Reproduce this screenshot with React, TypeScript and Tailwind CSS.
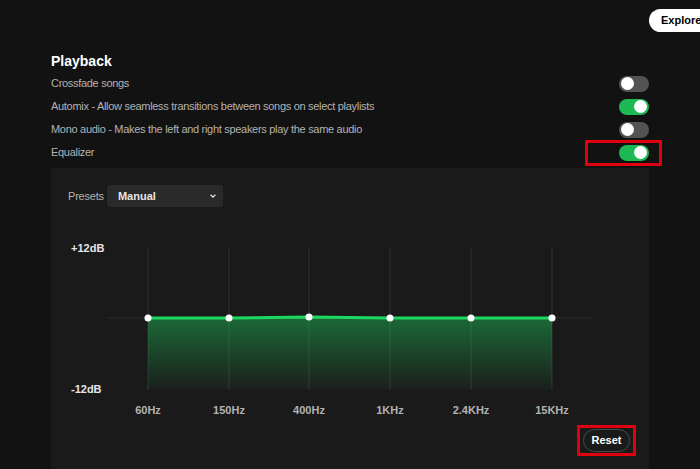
import React from 'react'

const font = { fontFamily: '"Liberation Sans", Arial, sans-serif' }

function Toggle({ on }: { on: boolean }) {
  return (
    <div
      className={`relative h-[16px] w-[30px] rounded-full ${on ? 'bg-[#1db954]' : 'bg-[#535353]'}`}
    >
      <div
        className={`absolute top-[1.5px] h-[13px] w-[13px] rounded-full bg-white ${on ? 'left-[15px]' : 'left-[1.5px]'}`}
      />
    </div>
  )
}

const rows = [
  { label: 'Crossfade songs', on: false },
  { label: 'Automix - Allow seamless transitions between songs on select playlists', on: true },
  { label: 'Mono audio - Makes the left and right speakers play the same audio', on: false },
  { label: 'Equalizer', on: true },
]

// chart coordinates are relative to the panel (panel left = 51px on page)
const bands = [
  { x: 97, y: 88, label: '60Hz' },
  { x: 178, y: 88, label: '150Hz' },
  { x: 258, y: 87, label: '400Hz' },
  { x: 339, y: 88, label: '1KHz' },
  { x: 420, y: 88, label: '2.4KHz' },
  { x: 501, y: 88, label: '15KHz' },
]

function Chart() {
  const top = 18
  const bottom = 160
  const line = bands.map((b) => `${b.x},${b.y}`).join(' ')
  const area = `${bands[0].x},${bottom} ${line} ${bands[bands.length - 1].x},${bottom}`
  return (
    <svg width="598" height="196" viewBox="0 0 598 196" className="block">
      <defs>
        <linearGradient id="eqfill" x1="0" y1="0" x2="0" y2="1">
          <stop offset="0" stopColor="#1db954" stopOpacity="0.5" />
          <stop offset="1" stopColor="#1db954" stopOpacity="0.03" />
        </linearGradient>
      </defs>
      {bands.map((b) => (
        <line key={b.label} x1={b.x} x2={b.x} y1={top} y2={bottom} stroke="#333333" strokeWidth="1" />
      ))}
      <line x1="57" x2="541" y1="88" y2="88" stroke="#2c2c2c" strokeWidth="1" />
      <polygon points={area} fill="url(#eqfill)" />
      <polyline points={line} fill="none" stroke="#1ed760" strokeWidth="3" />
      {bands.map((b) => (
        <circle key={b.label + 'd'} cx={b.x} cy={b.y} r="3.5" fill="#ffffff" />
      ))}
      <text x="20" y="22" fill="#e6e6e6" fontSize="11" fontWeight="700" style={font}>
        +12dB
      </text>
      <text x="20" y="163" fill="#e6e6e6" fontSize="11" fontWeight="700" style={font}>
        -12dB
      </text>
      {bands.map((b) => (
        <text
          key={b.label + 't'}
          x={b.x}
          y="184"
          textAnchor="middle"
          fill="#b3b3b3"
          fontSize="11"
          fontWeight="700"
          style={font}
        >
          {b.label}
        </text>
      ))}
    </svg>
  )
}

export default function App() {
  return (
    <div className="relative h-[469px] w-[700px] overflow-hidden bg-[#121212]" style={font}>
      {/* top bar */}
      <div className="absolute left-[649px] top-[9px] flex h-[23px] items-center whitespace-nowrap rounded-full bg-white pl-[12px] pr-[16px] text-[11px] font-bold text-black">
        Explore Premium
      </div>

      <div className="ml-[51px] w-[598px] pt-[50px]">
        <h2 className="h-[22px] text-[14px] font-bold leading-[22px] text-white">Playback</h2>
        <div className="flex flex-col">
          {rows.map((r) => (
            <div key={r.label} className="flex h-[23px] items-center justify-between">
              <span className="text-[11px] tracking-[-0.3px] text-[#b3b3b3]">{r.label}</span>
              <Toggle on={r.on} />
            </div>
          ))}
        </div>

        {/* equalizer panel */}
        <div className="mt-[4px] h-[320px] bg-[#1a1a1a]">
          <div className="flex items-center gap-[3px] pl-[17px] pt-[17px]">
            <span className="text-[11px] tracking-[-0.2px] text-[#b3b3b3]">Presets</span>
            <div className="flex h-[22px] w-[116px] items-center justify-between rounded-[3px] bg-[#2a2a2a] pl-[11px] pr-[6px]">
              <span className="text-[11px] font-bold text-[#e6e6e6]">Manual</span>
              <svg width="8" height="8" viewBox="0 0 10 10">
                <path d="M2 3.5 L5 6.5 L8 3.5" fill="none" stroke="#e6e6e6" strokeWidth="1.6" />
              </svg>
            </div>
          </div>
          <div className="mt-[23px]">
            <Chart />
          </div>
          <div className="flex justify-end pr-[19px] pt-[3px]">
            <button className="h-[23px] w-[47px] rounded-full border border-[#4a4a4a] bg-[#1a1a1a] text-[11px] font-bold text-white">
              Reset
            </button>
          </div>
        </div>
      </div>

      {/* highlight boxes */}
      <div className="absolute left-[585px] top-[140px] h-[26px] w-[77px] border-[3px] border-[#e1000f]" />
      <div className="absolute left-[577px] top-[425px] h-[31px] w-[59px] border-[3px] border-[#e1000f]" />
    </div>
  )
}
